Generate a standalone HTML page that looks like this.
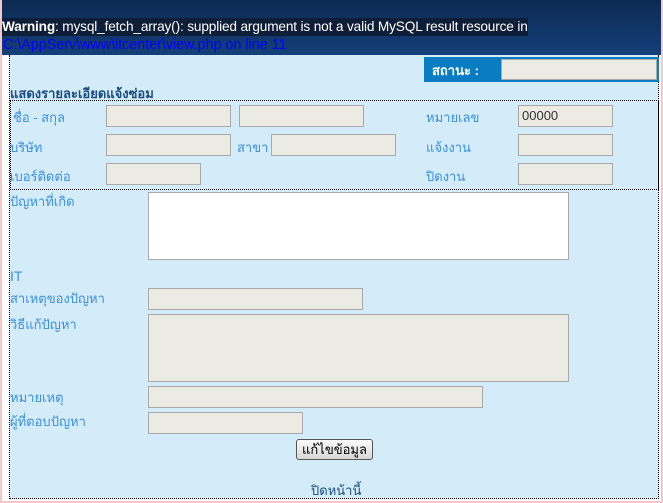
<!DOCTYPE html>
<html><head><meta charset="utf-8"><style>
*{margin:0;padding:0;box-sizing:border-box}
body{width:663px;height:503px;overflow:hidden;background:#f4c8c8;position:relative;font-family:Tahoma,"Liberation Sans","Noto Sans CJK SC",sans-serif;font-size:12px}
.a{position:absolute}
.frame{left:2px;top:0;width:659px;height:501px;background:#fff}
.hdr{left:2px;top:0;width:659px;height:55px;background:linear-gradient(#0c2a52,#143f78)}
.warn{left:2px;top:18px;width:526px;height:18px;background:#0e1e38;color:#fff;font-size:13.65px;line-height:18px;white-space:nowrap;font-family:"Liberation Sans",sans-serif;letter-spacing:-0.15px}
.link{left:3px;top:37px;color:#0000ff;font-size:14.3px;line-height:17px;white-space:nowrap;font-family:"Liberation Sans",sans-serif}
.main{left:9px;top:55px;width:650px;height:444px;background:#d4ecfa;border:1px dotted #000;border-top:none}
.stat{left:424px;top:57px;width:235px;height:25px;background:#0a7dc2}
.lbl{color:#3a8fe0;font-size:13px;white-space:nowrap}
.in{background:#ebebe4;border:1px solid #a8a8a8}
.w{background:#fff}
</style></head><body>
<div class="a frame"></div>
<div class="a hdr"></div>
<div class="a warn"><b>Warning</b>: mysql_fetch_array(): supplied argument is not a valid MySQL result resource in</div>
<div class="a link">C:\AppServ\www\itcenter\view.php on line 11</div>
<div class="a main"></div>
<div class="a stat"></div>
<div class="a" style="left:432px;top:60px;color:#fff;font-weight:bold;font-size:13px">สถานะ :</div>
<div class="a in" style="left:501px;top:59px;width:156px;height:21px"></div>
<div class="a" style="left:10px;top:83px;color:#1b4e80;font-weight:bold;font-size:13px">แสดงรายละเอียดแจ้งซ่อม</div>
<div class="a" style="left:10px;top:100px;width:649px;height:90px;border:1px dotted #000"></div>
<div class="a lbl" style="left:13px;top:107px">ชื่อ - สกุล</div>
<div class="a in" style="left:106px;top:105px;width:125px;height:22px"></div>
<div class="a in" style="left:239px;top:105px;width:125px;height:22px"></div>
<div class="a lbl" style="left:426px;top:107px">หมายเลข</div>
<div class="a in" style="left:518px;top:105px;width:95px;height:22px;color:#333;font-size:13px;padding:2px 3px">00000</div>
<div class="a lbl" style="left:10px;top:137px">บริษัท</div>
<div class="a in" style="left:106px;top:134px;width:125px;height:22px"></div>
<div class="a lbl" style="left:237px;top:137px">สาขา</div>
<div class="a in" style="left:271px;top:134px;width:125px;height:22px"></div>
<div class="a lbl" style="left:426px;top:137px">แจ้งงาน</div>
<div class="a in" style="left:518px;top:134px;width:95px;height:22px"></div>
<div class="a lbl" style="left:10px;top:166px">เบอร์ติดต่อ</div>
<div class="a in" style="left:106px;top:163px;width:95px;height:22px"></div>
<div class="a lbl" style="left:426px;top:166px">ปิดงาน</div>
<div class="a in" style="left:518px;top:163px;width:95px;height:22px"></div>
<div class="a lbl" style="left:10px;top:191px">ปัญหาที่เกิด</div>
<div class="a in w" style="left:148px;top:192px;width:421px;height:68px"></div>
<div class="a lbl" style="left:10px;top:268px;font-size:14px">IT</div>
<div class="a lbl" style="left:10px;top:288px">สาเหตุของปัญหา</div>
<div class="a in" style="left:148px;top:288px;width:215px;height:22px"></div>
<div class="a lbl" style="left:10px;top:314px">วิธีแก้ปัญหา</div>
<div class="a in" style="left:148px;top:314px;width:421px;height:68px"></div>
<div class="a lbl" style="left:10px;top:387px">หมายเหตุ</div>
<div class="a in" style="left:148px;top:386px;width:335px;height:22px"></div>
<div class="a lbl" style="left:10px;top:411px">ผู้ที่ตอบปัญหา</div>
<div class="a in" style="left:148px;top:412px;width:155px;height:22px"></div>
<div class="a" style="left:296px;top:439px;width:77px;height:21px;border:1px solid #555;border-radius:3px;background:linear-gradient(#fafafa,#d8d8d8);text-align:center;line-height:19px;font-size:13px;color:#000">แก้ไขข้อมูล</div>
<div class="a" style="left:311px;top:480px;color:#1b4e80;font-size:13px">ปิดหน้านี้</div>
</body></html>
